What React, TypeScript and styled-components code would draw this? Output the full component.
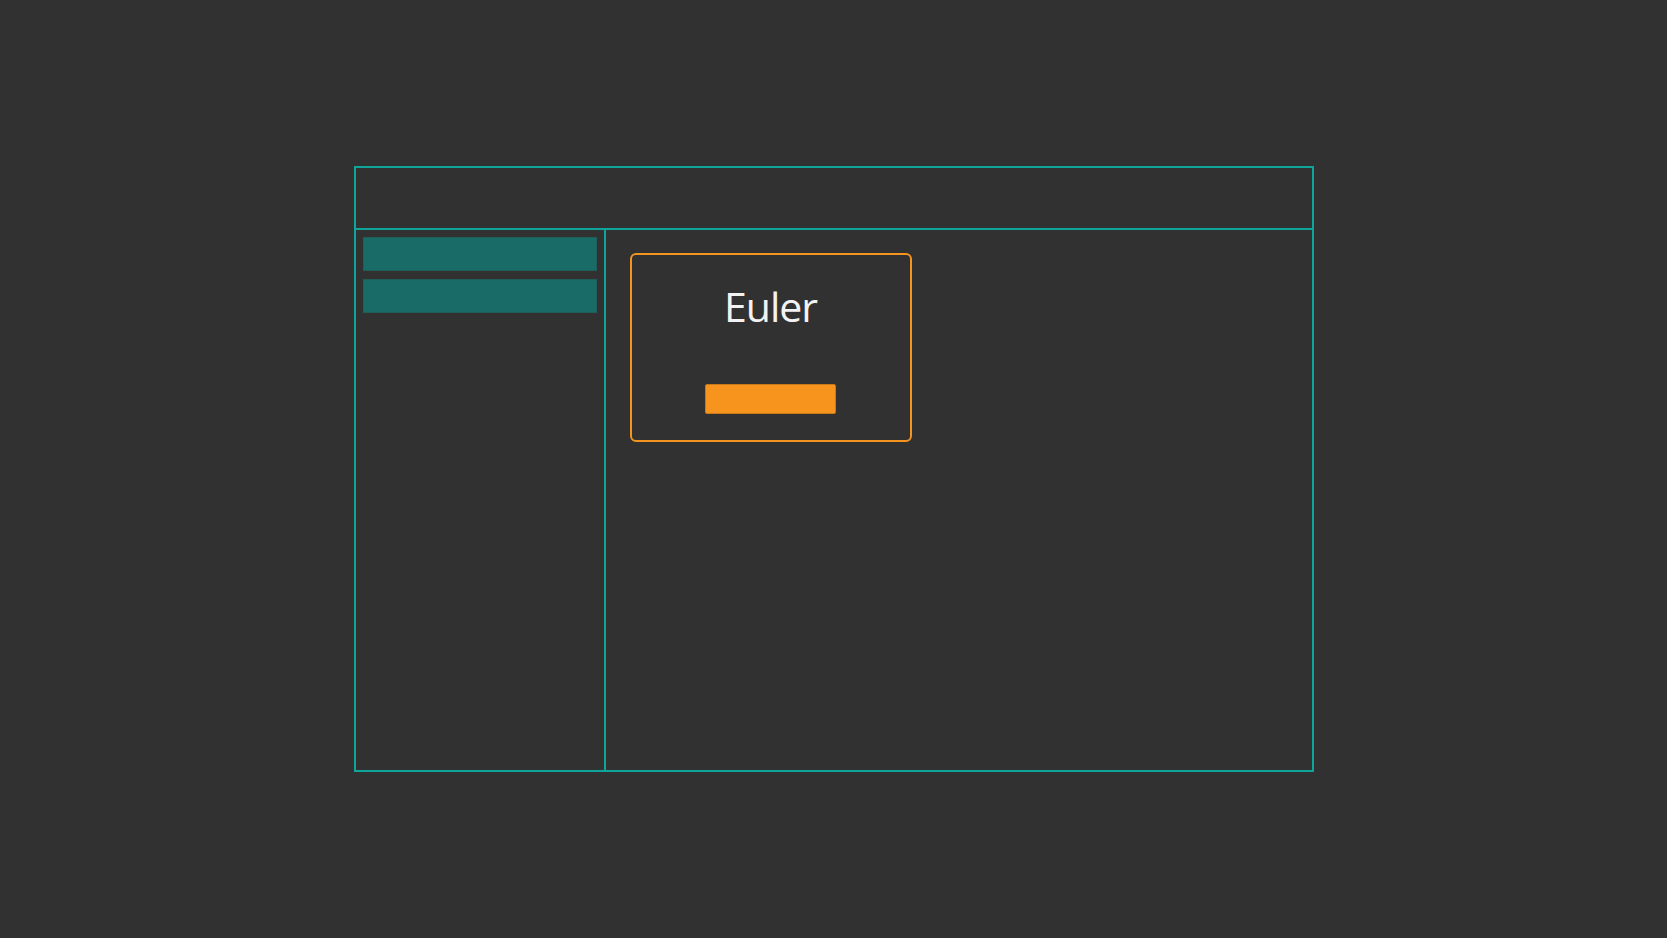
import React from "react";
import styled, { createGlobalStyle } from "styled-components";

const Global = createGlobalStyle`
  html, body { margin: 0; padding: 0; background: #313131; overflow: hidden; }
  body { font-family: "Open Sans", "Noto Sans", sans-serif; }
  * { box-sizing: border-box; }
`;

const Page = styled.div`
  width: 1667px;
  height: 938px;
  display: flex;
  align-items: center;
  justify-content: center;
  background: #313131;
`;

const Frame = styled.div`
  width: 960px;
  height: 606px;
  border: 2px solid #0fa59b;
  display: flex;
  flex-direction: column;
`;

const Header = styled.div`
  height: 62px;
  flex: none;
  border-bottom: 2px solid #0fa59b;
`;

const Body = styled.div`
  flex: 1;
  display: flex;
  min-height: 0;
`;

const Sidebar = styled.div`
  width: 250px;
  flex: none;
  border-right: 2px solid #0fa59b;
  padding: 7px;
  display: flex;
  flex-direction: column;
  gap: 8px;
`;

const NavItem = styled.div`
  height: 34px;
  background: #186b66;
  border: 1px solid #1e5f5a;
`;

const Main = styled.div`
  flex: 1;
  padding: 23px 24px;
`;

const Card = styled.div`
  width: 282px;
  height: 189px;
  border: 2px solid #f39320;
  border-radius: 6px;
  display: flex;
  flex-direction: column;
  align-items: center;
  padding-top: 31px;
`;

const Title = styled.div`
  font-size: 41px;
  line-height: 40px;
  color: #f2f2f2;
  letter-spacing: -1px;
`;

const ActionButton = styled.div`
  margin-top: 58px;
  width: 131px;
  height: 30px;
  background: #f7941d;
  border: 1px solid #c9791a;
  border-radius: 2px;
`;

export default function App() {
  return (
    <>
      <Global />
      <Page>
        <Frame>
          <Header />
          <Body>
            <Sidebar>
              <NavItem />
              <NavItem />
            </Sidebar>
            <Main>
              <Card>
                <Title>Euler</Title>
                <ActionButton />
              </Card>
            </Main>
          </Body>
        </Frame>
      </Page>
    </>
  );
}
